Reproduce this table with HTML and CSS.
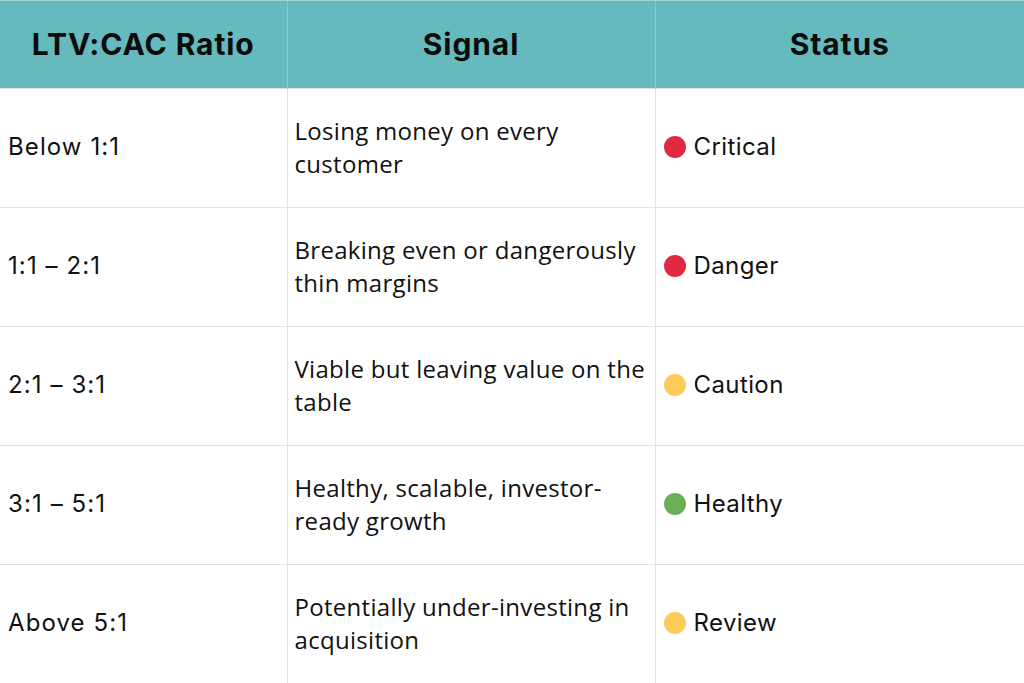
FILE: index.html
```html
<!DOCTYPE html>
<html>
<head>
<meta charset="utf-8">
<link rel="stylesheet" href="styles.css">
</head>
<body>
<table class="ratio-table">
  <colgroup>
    <col class="c1"><col class="c2"><col class="c3">
  </colgroup>
  <thead>
    <tr><th>LTV:CAC Ratio</th><th>Signal</th><th>Status</th></tr>
  </thead>
  <tbody>
    <tr><td class="ratio">Below 1:1</td><td class="signal">Losing money on every customer</td><td class="status"><span class="dot red"></span>Critical</td></tr>
    <tr><td class="ratio">1:1 – 2:1</td><td class="signal">Breaking even or dangerously thin margins</td><td class="status"><span class="dot red"></span>Danger</td></tr>
    <tr><td class="ratio">2:1 – 3:1</td><td class="signal">Viable but leaving value on the table</td><td class="status"><span class="dot yellow"></span>Caution</td></tr>
    <tr><td class="ratio">3:1 – 5:1</td><td class="signal">Healthy, scalable, investor-ready growth</td><td class="status"><span class="dot green"></span>Healthy</td></tr>
    <tr><td class="ratio">Above 5:1</td><td class="signal">Potentially under-investing in acquisition</td><td class="status"><span class="dot yellow"></span>Review</td></tr>
  </tbody>
</table>
</body>
</html>
```

FILE: styles.css
```css
html, body {
  margin: 0;
  padding: 0;
  background: #ffffff;
}
.ratio-table {
  width: 1024px;
  height: 683px;
  border-collapse: collapse;
  table-layout: fixed;
  color: #111111;
}
.c1 { width: 287px; }
.c2 { width: 368px; }
.c3 { width: 369px; }
.ratio-table th {
  height: 85px;
  background: #66b9bd;
  font-family: "Inter", "Open Sans", sans-serif;
  font-weight: 700;
  font-size: 30px;
  letter-spacing: 0.9px;
  text-align: center;
  color: #0c0c0c;
  border-left: 1px solid #8cc9cc;
  border-top: 1px solid #9ecfd1;
  padding: 0 0 2px;
}
.ratio-table th:first-child { border-left: none; }
.ratio-table td {
  height: 115px;
  border: 1px solid #e2e2e2;
  vertical-align: middle;
  line-height: 33px;
  padding: 0 8px 3px;
}
.ratio-table td:first-child { border-left: none; }
.ratio-table tr:last-child td { border-bottom: none; }
.ratio {
  font-family: "Inter", "Open Sans", sans-serif;
  font-size: 24px;
  letter-spacing: 1.1px;
}
.signal {
  font-family: "Open Sans", sans-serif;
  font-size: 24px;
  letter-spacing: 0.3px;
  padding-left: 7px !important;
  padding-right: 1px !important;
}
.status {
  font-family: "Inter", "Open Sans", sans-serif;
  font-size: 24px;
  letter-spacing: 0.4px;
}
.dot {
  display: inline-block;
  width: 22px;
  height: 22px;
  border-radius: 50%;
  vertical-align: -3px;
  margin-right: 8px;
}
.red { background: #e0293f; }
.yellow { background: #fdcb58; }
.green { background: #6aae55; }
```
